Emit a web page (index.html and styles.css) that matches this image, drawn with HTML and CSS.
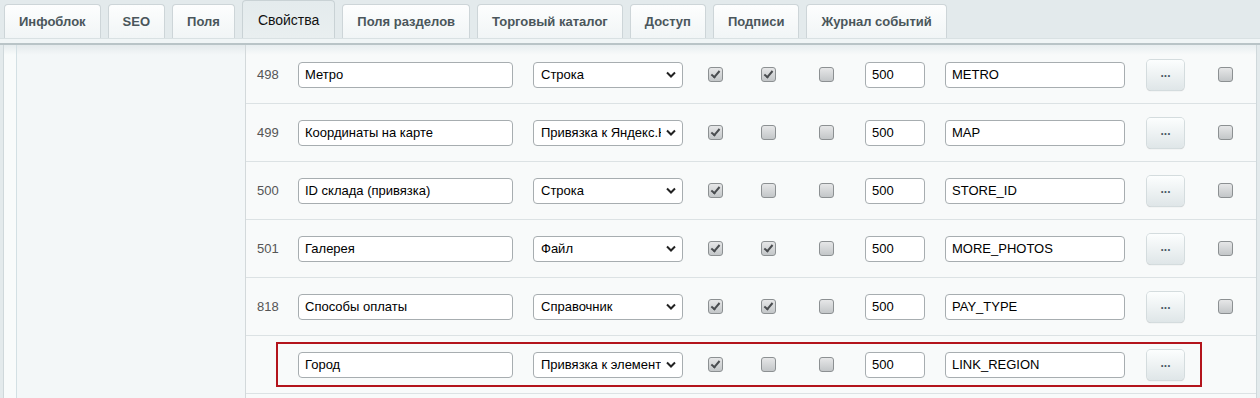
FILE: index.html
```html
<!DOCTYPE html>
<html lang="ru">
<head>
    <meta charset="UTF-8">
    <title>Свойства инфоблока</title>
    <link rel="stylesheet" href="styles.css">
</head>
<body>
    <div class="tabs">
        <div class="tab">Инфоблок</div>
        <div class="tab">SEO</div>
        <div class="tab">Поля</div>
        <div class="tab active">Свойства</div>
        <div class="tab">Поля разделов</div>
        <div class="tab">Торговый каталог</div>
        <div class="tab">Доступ</div>
        <div class="tab">Подписи</div>
        <div class="tab">Журнал событий</div>
    </div>
    <div class="strip"></div>

    <div class="panel">
        <div class="side"></div>
        <div class="grid">
            <div class="row">
                <span class="id">498</span>
                <div class="name"><input class="field" type="text" value="Метро"></div>
                <div class="type"><div class="select"><span>Строка</span><svg width="10" height="7" viewBox="0 0 10 7"><polyline points="1,1.5 5,5.5 9,1.5" fill="none" stroke="#222" stroke-width="2"/></svg></div></div>
                <div class="c1"><span class="cb checked"></span></div>
                <div class="c2"><span class="cb checked"></span></div>
                <div class="c3"><span class="cb"></span></div>
                <div class="sort"><input class="field" type="text" value="500"></div>
                <div class="code"><input class="field" type="text" value="METRO"></div>
                <div class="more"><button class="btn">...</button></div>
                <div class="c4"><span class="cb"></span></div>
            </div>
            <div class="row">
                <span class="id">499</span>
                <div class="name"><input class="field" type="text" value="Координаты на карте"></div>
                <div class="type"><div class="select"><span>Привязка к Яндекс.Карте</span><svg width="10" height="7" viewBox="0 0 10 7"><polyline points="1,1.5 5,5.5 9,1.5" fill="none" stroke="#222" stroke-width="2"/></svg></div></div>
                <div class="c1"><span class="cb checked"></span></div>
                <div class="c2"><span class="cb"></span></div>
                <div class="c3"><span class="cb"></span></div>
                <div class="sort"><input class="field" type="text" value="500"></div>
                <div class="code"><input class="field" type="text" value="MAP"></div>
                <div class="more"><button class="btn">...</button></div>
                <div class="c4"><span class="cb"></span></div>
            </div>
            <div class="row">
                <span class="id">500</span>
                <div class="name"><input class="field" type="text" value="ID склада (привязка)"></div>
                <div class="type"><div class="select"><span>Строка</span><svg width="10" height="7" viewBox="0 0 10 7"><polyline points="1,1.5 5,5.5 9,1.5" fill="none" stroke="#222" stroke-width="2"/></svg></div></div>
                <div class="c1"><span class="cb checked"></span></div>
                <div class="c2"><span class="cb"></span></div>
                <div class="c3"><span class="cb"></span></div>
                <div class="sort"><input class="field" type="text" value="500"></div>
                <div class="code"><input class="field" type="text" value="STORE_ID"></div>
                <div class="more"><button class="btn">...</button></div>
                <div class="c4"><span class="cb"></span></div>
            </div>
            <div class="row">
                <span class="id">501</span>
                <div class="name"><input class="field" type="text" value="Галерея"></div>
                <div class="type"><div class="select"><span>Файл</span><svg width="10" height="7" viewBox="0 0 10 7"><polyline points="1,1.5 5,5.5 9,1.5" fill="none" stroke="#222" stroke-width="2"/></svg></div></div>
                <div class="c1"><span class="cb checked"></span></div>
                <div class="c2"><span class="cb checked"></span></div>
                <div class="c3"><span class="cb"></span></div>
                <div class="sort"><input class="field" type="text" value="500"></div>
                <div class="code"><input class="field" type="text" value="MORE_PHOTOS"></div>
                <div class="more"><button class="btn">...</button></div>
                <div class="c4"><span class="cb"></span></div>
            </div>
            <div class="row">
                <span class="id">818</span>
                <div class="name"><input class="field" type="text" value="Способы оплаты"></div>
                <div class="type"><div class="select"><span>Справочник</span><svg width="10" height="7" viewBox="0 0 10 7"><polyline points="1,1.5 5,5.5 9,1.5" fill="none" stroke="#222" stroke-width="2"/></svg></div></div>
                <div class="c1"><span class="cb checked"></span></div>
                <div class="c2"><span class="cb checked"></span></div>
                <div class="c3"><span class="cb"></span></div>
                <div class="sort"><input class="field" type="text" value="500"></div>
                <div class="code"><input class="field" type="text" value="PAY_TYPE"></div>
                <div class="more"><button class="btn">...</button></div>
                <div class="c4"><span class="cb"></span></div>
            </div>
            <div class="row marked">
                <span class="id"></span>
                <div class="name"><input class="field" type="text" value="Город"></div>
                <div class="type"><div class="select"><span>Привязка к элементам</span><svg width="10" height="7" viewBox="0 0 10 7"><polyline points="1,1.5 5,5.5 9,1.5" fill="none" stroke="#222" stroke-width="2"/></svg></div></div>
                <div class="c1"><span class="cb checked"></span></div>
                <div class="c2"><span class="cb"></span></div>
                <div class="c3"><span class="cb"></span></div>
                <div class="sort"><input class="field" type="text" value="500"></div>
                <div class="code"><input class="field" type="text" value="LINK_REGION"></div>
                <div class="more"><button class="btn">...</button></div>
            </div>
        </div>
    </div>
</body>
</html>
```

FILE: styles.css
```css
body {
    font-family: 'Liberation Sans', Arial, sans-serif;
    font-size: 13px;
    margin: 0;
    padding: 0;
    background: #e3eaec;
    height: 398px;
    overflow: hidden;
}

/* tabs */
.tabs {
    display: flex;
    align-items: flex-end;
    gap: 7px;
    height: 38px;
    padding-left: 4px;
}

.tab {
    height: 33px;
    line-height: 33px;
    padding: 0 14px;
    border: 1px solid #cdd5d8;
    border-bottom: none;
    border-radius: 4px 4px 0 0;
    background: linear-gradient(180deg, #fdfefe 0%, #f1f5f6 100%);
    color: #4a565b;
    font-weight: bold;
    white-space: nowrap;
}

.tab.active {
    height: 37px;
    line-height: 39px;
    padding: 0 15px;
    background: linear-gradient(180deg, #e4ebed 0%, #e9eff0 100%);
    border-color: #c9d2d5;
    color: #111;
    font-weight: normal;
    font-size: 14px;
}

.strip {
    height: 4px;
    background: #f0f5f6;
    border-top: 1px solid #d9e1e3;
    border-bottom: 2px solid #b9c4c7;
}

/* content */
.panel {
    display: flex;
    height: 353px;
    margin: 0 3px;
    padding-left: 12px;
    border-left: 1px solid #cfd8db;
    border-right: 1px solid #cfd8db;
    background: linear-gradient(180deg, #e6ecee 0px, #f8fbfb 10px);
}

.side {
    width: 228px;
    border-left: 1px solid #d3e0e4;
    border-right: 1px solid #d3d9db;
    background: linear-gradient(180deg, #e4eaec 0px, #f3f7f8 10px);
}

.grid {
    flex: 1;
    padding-top: 1px;
    background: linear-gradient(180deg, #e8eef0 0px, #f8fafa 10px);
}

.row {
    position: relative;
    display: flex;
    align-items: center;
    height: 57px;
    border-bottom: 1px solid #dce2e4;
}

.row.marked::after {
    content: '';
    position: absolute;
    left: 30px;
    top: 6px;
    width: 926px;
    height: 45px;
    box-sizing: border-box;
    border: 2px solid #b3141c;
}

.id {
    width: 52px;
    box-sizing: border-box;
    padding-left: 11px;
    color: #555;
}

.name { width: 235px; }
.type { width: 175px; }
.c1 { width: 53px; }
.c2 { width: 58px; }
.c3 { width: 46px; }
.sort { width: 80px; }
.code { width: 202px; }
.more { width: 71px; }

.name .field { width: 215px; }
.sort .field { width: 60px; }
.code .field { width: 180px; }

.field {
    display: block;
    box-sizing: border-box;
    height: 26px;
    margin: 0;
    padding: 0 6px;
    border: 1px solid #a7adb0;
    border-radius: 4px;
    background: #fff;
    font-family: 'Liberation Sans', Arial, sans-serif;
    font-size: 13px;
    color: #000;
    outline: none;
}

.select {
    display: flex;
    align-items: center;
    justify-content: space-between;
    box-sizing: border-box;
    width: 150px;
    height: 26px;
    padding: 0 5px 0 7px;
    border: 1px solid #a7adb0;
    border-radius: 4px;
    background: #fff;
    color: #000;
}

.select span {
    width: 120px;
    overflow: hidden;
    white-space: nowrap;
}

.select svg {
    margin-right: 1px;
}

.cb {
    display: block;
    position: relative;
    width: 15px;
    height: 15px;
    box-sizing: border-box;
    border: 1px solid #8c9092;
    border-radius: 3px;
    background: linear-gradient(180deg, #e6e7e8 0%, #c3c6c8 100%);
}

.cb.checked::after {
    content: '';
    position: absolute;
    left: 4px;
    top: 1px;
    width: 3px;
    height: 7px;
    border-right: 2px solid #4a4d50;
    border-bottom: 2px solid #4a4d50;
    transform: rotate(40deg);
}

.btn {
    display: block;
    width: 37px;
    height: 30px;
    padding: 0 0 4px;
    border: none;
    border-radius: 4px;
    background: linear-gradient(180deg, #fcfefe 0%, #dfe6e8 100%);
    box-shadow: 0 0 0 1px #d4dcde, 0 1px 1px rgba(0, 0, 0, 0.25);
    font-family: 'Liberation Sans', Arial, sans-serif;
    font-size: 12px;
    font-weight: bold;
    color: #4b5a66;
}
```
